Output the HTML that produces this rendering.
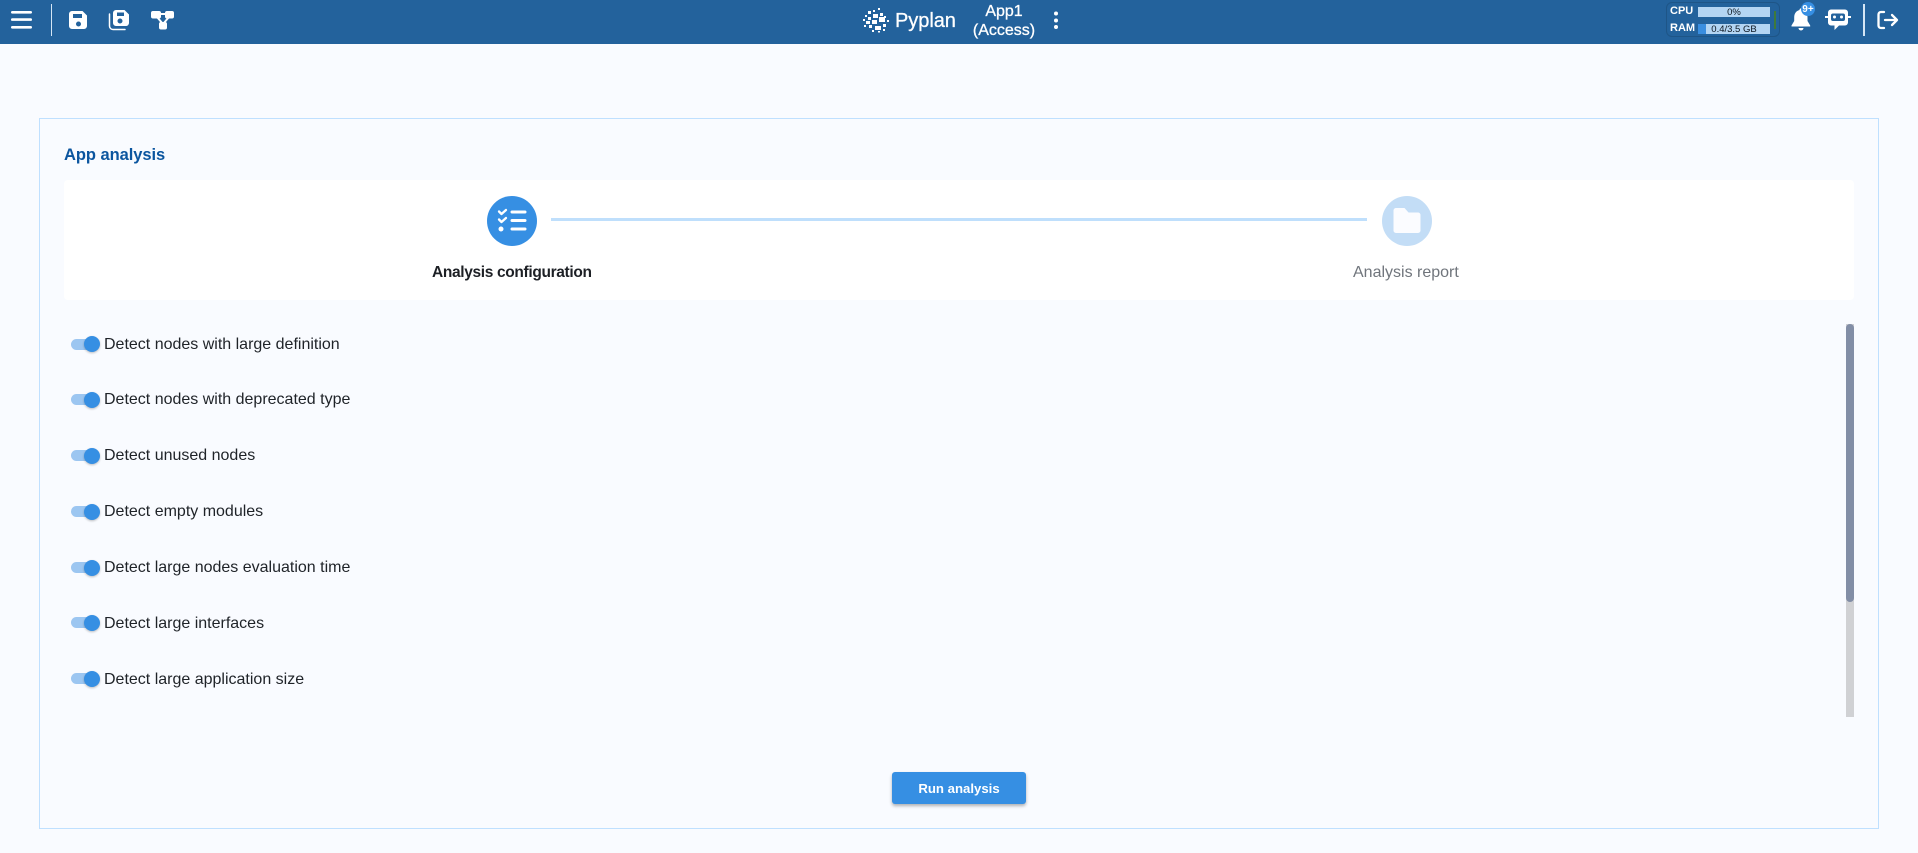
<!DOCTYPE html>
<html lang="en"><head><meta charset="utf-8"><title>App analysis</title>
<style>
html,body{margin:0;padding:0;width:1918px;height:853px;overflow:hidden;background:#f9fbff;font-family:"Liberation Sans",Arial,sans-serif}
.a{position:absolute;white-space:nowrap}
header{position:absolute;left:0;top:0;width:1918px;height:44px;background:#23629c}
.sep{position:absolute;top:4px;width:1.5px;height:32px;background:#d5e6f5}
.panel{position:absolute;left:39px;top:118px;width:1838px;height:709px;border:1px solid #bfe0ff;box-sizing:content-box}
.card{position:absolute;left:64px;top:180px;width:1790px;height:120px;background:#fff;border-radius:4px}
.tr{position:absolute;left:71px;width:24px;height:11px;border-radius:6px;background:#9cc6f1}
.th{position:absolute;left:84px;width:16px;height:16px;border-radius:50%;background:#368fe3;box-shadow:0 1px 2px rgba(0,0,0,.25)}
.lb{position:absolute;left:104px;font-size:16px;line-height:20px;color:#1f2328;white-space:nowrap}
</style></head><body>
<header>
<svg class="a" style="left:0;top:0" width="180" height="44" fill="#fff">
<rect x="11" y="11" width="21" height="2.6" rx="1.3"/><rect x="11" y="18.300" width="21" height="2.600" rx="1.300"/><rect x="11" y="26" width="21" height="2.600" rx="1.300"/>
<path fill-rule="evenodd" d="M72 11h10.500l4.500 4.500V26a3 3 0 0 1-3 3H72a3 3 0 0 1-3-3V14a3 3 0 0 1 3-3zm1 3v4h9v-4zm5.500 7.500a2.500 2.500 0 1 0 0 5 2.500 2.500 0 0 0 0-5z"/>
<path fill-rule="evenodd" d="M116 10h8.500l4.500 4.500V23a3 3 0 0 1-3 3h-10a3 3 0 0 1-3-3V13a3 3 0 0 1 3-3zm1 2.500V16h7v-3.500zm3 6a2.500 2.500 0 1 0 0 5 2.500 2.500 0 0 0 0-5z"/>
<path d="M109.500 14v12a3.500 3.500 0 0 0 3.500 3.500h12" fill="none" stroke="#fff" stroke-width="1.500" stroke-linecap="round"/>
<rect x="151" y="11" width="10" height="7.500" rx="2"/><rect x="165" y="11" width="9" height="7.500" rx="2"/><rect x="159" y="22" width="8" height="7.500" rx="2"/>
<path d="M160 14h6M157 17l6 7M169 17l-6 7" stroke="#fff" stroke-width="2" fill="none"/>
</svg>
<div class="sep" style="left:50.500px"></div>

<svg class="a" style="left:862px;top:7px" width="28" height="26" fill="#fff">
<rect x="11" y="3" width="2" height="2"/><rect x="16" y="1" width="2" height="2"/><rect x="6" y="4" width="3" height="3"/><rect x="11" y="7" width="5" height="4"/><rect x="18" y="6" width="3" height="3"/><rect x="22" y="9" width="2" height="2"/>
<rect x="3" y="8" width="2" height="2"/><rect x="6" y="10" width="3" height="3"/><rect x="1" y="12" width="2" height="2"/><rect x="17" y="10" width="6" height="5"/><rect x="25" y="13" width="2" height="2"/>
<rect x="4" y="14" width="4" height="3"/><rect x="10" y="13" width="5" height="4"/><rect x="2" y="18" width="2" height="2"/><rect x="7" y="18" width="3" height="3"/><rect x="13" y="19" width="6" height="4"/><rect x="21" y="17" width="3" height="3"/><rect x="10" y="23" width="2" height="2"/><rect x="16" y="24" width="2" height="1.500"/><rect x="21" y="22" width="2" height="2"/>
</svg>
<div class="a" style="left:895px;top:9px;font-size:20px;line-height:24px;color:#fff;-webkit-text-stroke:.3px #fff;letter-spacing:-.05px">Pyplan</div>
<div class="a" style="left:954px;width:100px;top:2px;text-align:center;color:#fff;font-size:16px;line-height:19px;-webkit-text-stroke:.3px #fff">App1<br>(Access)</div>
<svg class="a" style="left:1051px;top:10px" width="10" height="22" fill="#fff"><circle cx="5" cy="3.500" r="2"/><circle cx="5" cy="10.500" r="2"/><circle cx="5" cy="17" r="2"/></svg>

<div class="a" style="left:1666px;top:2px;width:114px;height:35px;box-sizing:border-box;border:1px solid #1e5587;border-radius:6px"></div>
<div class="a" style="left:1670px;top:4px;font-size:11px;line-height:14px;font-weight:bold;color:#fff">CPU</div>
<div class="a" style="left:1670px;top:21px;font-size:11px;line-height:14px;font-weight:bold;color:#fff">RAM</div>
<div class="a" style="left:1698px;top:7px;width:72px;height:10px;background:#b4d5f3;font-size:9.500px;line-height:11px;text-align:center;color:#0c1620">0%</div>
<div class="a" style="left:1698px;top:24px;width:72px;height:10px;background:#b4d5f3;font-size:9.500px;line-height:12px;text-align:center;color:#0c1620"><span class="a" style="left:0;top:0;width:8px;height:10px;background:#3a8ee0"></span><span style="position:relative">0.4/3.5 GB</span></div>
<div class="a" style="left:1774px;top:11px;width:2px;height:18px;background:#3f7a3a"></div>

<svg class="a" style="left:1786px;top:0" width="34" height="34" fill="#fff">
<path d="M13.500 10a1.600 1.600 0 0 1 3.200 0c3.600 1 4.800 4 4.800 7.500v3.500l2.700 4.500v1H5.500v-1l2.700-4.500v-3.500c0-3.500 1.500-6.500 5.300-7.500z"/><path d="M12.500 28h5a2.500 2.500 0 0 1-5 0z"/>
<circle cx="22" cy="9" r="7" fill="#368fe3"/>
<text x="22" y="12" font-size="10" font-weight="bold" text-anchor="middle" fill="#fff" font-family="Liberation Sans,sans-serif">9+</text>
</svg>
<svg class="a" style="left:1824px;top:8px" width="28" height="24" fill="#fff">
<path d="M7 1.500h14a3 3 0 0 1 3 3v10a3 3 0 0 1-3 3h-6l-4.500 4.500v-4.500H7a3 3 0 0 1-3-3v-10a3 3 0 0 1 3-3z"/>
<rect x="7" y="5.500" width="14" height="7.500" rx="2" fill="#23629c"/>
<circle cx="10.500" cy="9" r="1.500"/><circle cx="17.500" cy="9" r="1.500"/>
<rect x="1" y="8" width="3" height="2"/><rect x="24" y="8" width="3" height="2"/>
</svg>
<div class="sep" style="left:1863px"></div>
<svg class="a" style="left:1876px;top:9px" width="24" height="24" fill="none" stroke="#fff" stroke-width="2.300" stroke-linecap="round" stroke-linejoin="round">
<path d="M8 3H5a2.500 2.500 0 0 0-2.500 2.500v11A2.500 2.500 0 0 0 5 19h3"/><path d="M9 11h12M16 6l5 5-5 5"/>
</svg>
</header>

<div class="panel"></div>
<div class="a" style="left:64px;top:145px;font-size:16.500px;line-height:20px;font-weight:bold;color:#0b559f;letter-spacing:-.05px">App analysis</div>
<div class="card"></div>

<div class="a" style="left:551px;top:218px;width:816px;height:3px;background:#bfdffc"></div>
<svg class="a" style="left:487px;top:196px" width="50" height="50">
<circle cx="25" cy="25" r="25" fill="#368fe3"/>
<g fill="none" stroke="#fff" stroke-linecap="round" stroke-linejoin="round">
<path d="M25 16h13M25 24.500h13M25 33h13" stroke-width="3"/>
<path d="M12 15.500l2.500 2.500L19 14M12 23.500l2.500 2.500L19 22" stroke-width="2.300"/></g>
<circle cx="14" cy="33" r="2.500" fill="#fff"/>
</svg>
<div class="a" style="left:432px;top:263px;font-size:15.500px;line-height:20px;font-weight:bold;color:#1d2025;letter-spacing:-.34px">Analysis configuration</div>

<svg class="a" style="left:1382px;top:196px" width="50" height="50">
<circle cx="25" cy="25" r="25" fill="#c3ddf6"/>
<path d="M14 12h8.500l4 4.500h9.500a2.500 2.500 0 0 1 2.500 2.500V34.500a2.500 2.500 0 0 1-2.500 2.500H14a2.500 2.500 0 0 1-2.500-2.500V14.500A2.500 2.500 0 0 1 14 12z" fill="#fbfcff"/>
</svg>
<div class="a" style="left:1353px;top:263px;font-size:16px;line-height:20px;color:#70757c">Analysis report</div>

<div class="tr" style="top:339px"></div><div class="th" style="top:336px"></div><div class="lb" style="top:335px">Detect nodes with large definition</div>
<div class="tr" style="top:394px"></div><div class="th" style="top:392px"></div><div class="lb" style="top:390px">Detect nodes with deprecated type</div>
<div class="tr" style="top:450px"></div><div class="th" style="top:448px"></div><div class="lb" style="top:446px">Detect unused nodes</div>
<div class="tr" style="top:506px"></div><div class="th" style="top:504px"></div><div class="lb" style="top:502px">Detect empty modules</div>
<div class="tr" style="top:562px"></div><div class="th" style="top:560px"></div><div class="lb" style="top:558px">Detect large nodes evaluation time</div>
<div class="tr" style="top:617px"></div><div class="th" style="top:615px"></div><div class="lb" style="top:614px">Detect large interfaces</div>
<div class="tr" style="top:673px"></div><div class="th" style="top:671px"></div><div class="lb" style="top:670px">Detect large application size</div>

<div class="a" style="left:1846px;top:324px;width:8px;height:393px;background:#d0d1d4"></div>
<div class="a" style="left:1846px;top:324px;width:8px;height:278px;background:#828ea6;border-radius:4px"></div>

<div class="a" style="left:892px;top:772px;width:134px;height:32px;background:#368fe3;border-radius:3px;box-shadow:0 2px 3px rgba(0,0,0,.3);color:#fff;font-size:13.200px;font-weight:bold;line-height:33px;text-align:center">Run analysis</div>
</body></html>
